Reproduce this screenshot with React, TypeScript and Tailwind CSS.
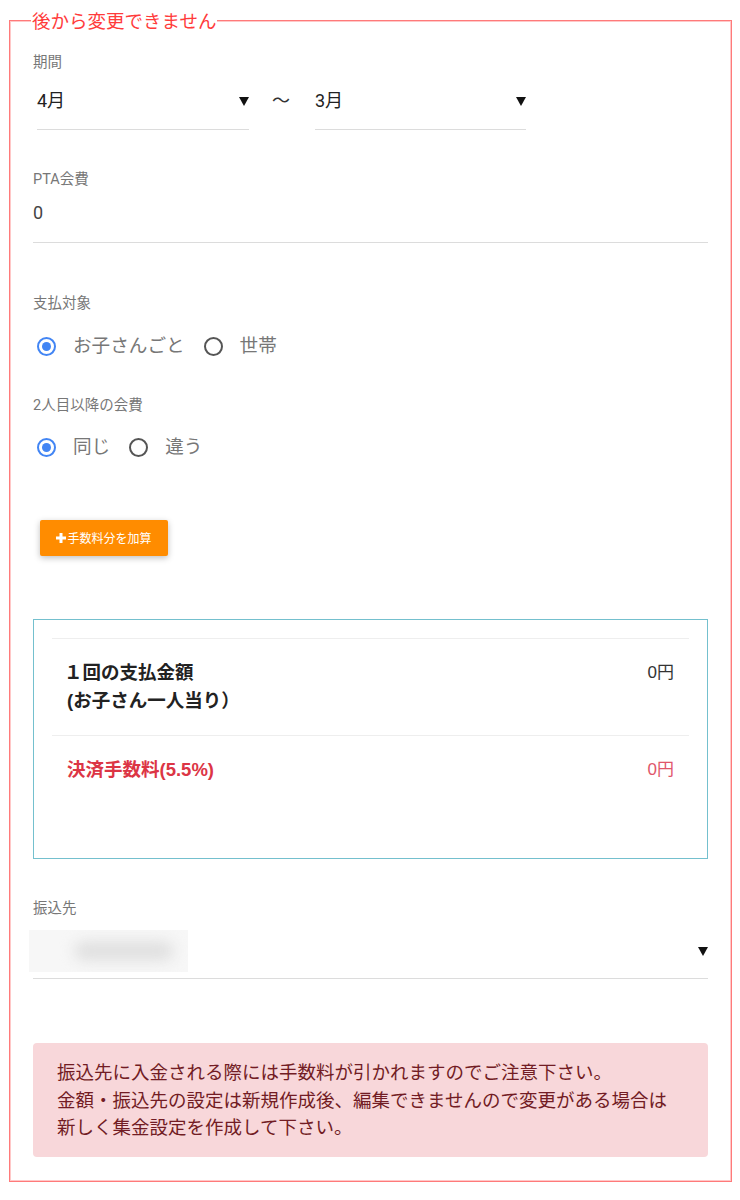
import React from "react";

const Caret = () => (
  <svg width="10" height="9" viewBox="0 0 10 9" className="shrink-0">
    <path d="M0 0h10L5 9z" fill="#111" />
  </svg>
);

const Radio = ({ checked, label, first }: { checked: boolean; label: string; first?: boolean }) => (
  <label className={`flex items-center gap-[17px] mr-[19px] ${first ? "ml-[4px]" : ""}`}>
    {checked ? (
      <span className="w-[19px] h-[19px] rounded-full border-[2px] border-[#4285f4] flex items-center justify-center">
        <span className="w-[9px] h-[9px] rounded-full bg-[#4285f4]" />
      </span>
    ) : (
      <span className="w-[19px] h-[19px] rounded-full border-[2.5px] border-[#555]" />
    )}
    <span className="text-[18.6px] leading-[24px] text-[#777]">{label}</span>
  </label>
);

const FieldLabel = ({ children, className }: { children: React.ReactNode; className?: string }) => (
  <div className={`text-[14.5px] leading-[22px] text-[#777] ${className ?? ""}`}>{children}</div>
);

export default function App() {
  return (
    <div className="w-[740px] min-h-[1200px] bg-white pt-[20px] font-['Roboto','Noto_Sans_CJK_JP',sans-serif]">
      <div className="ml-[9px] w-[723px] border border-[#ff7a7a] shadow-[inset_0_0_0_1px_#ffc8c8] px-[23px] pb-[24px]">
        <div className="-mt-[14px] -ml-[2px] h-[26px]">
          <span className="inline-block px-[1px] bg-white text-[18.5px] leading-[26px] text-[#ff3b3b] font-['Noto_Sans_CJK_JP',sans-serif]">
            後から変更できません
          </span>
        </div>

        {/* 期間 */}
        <FieldLabel className="mt-[19px]">期間</FieldLabel>
        <div className="mt-[11px] flex items-start">
          <div className="ml-[4px] w-[212px] flex items-center justify-between pt-[4px] pb-[16px] border-b border-[#dcdcdc]">
            <span className="text-[18px] leading-[24px] text-[#222]">4月</span>
            <Caret />
          </div>
          <span className="ml-[23px] pt-[4px] text-[18px] leading-[24px] text-[#333]">～</span>
          <div className="ml-[25px] w-[211px] flex items-center justify-between pt-[4px] pb-[16px] border-b border-[#dcdcdc]">
            <span className="text-[18px] leading-[24px] text-[#222]">3月</span>
            <Caret />
          </div>
        </div>

        {/* PTA会費 */}
        <FieldLabel className="mt-[39px]">PTA会費</FieldLabel>
        <div className="pt-[10px] pb-[17px] border-b border-[#dcdcdc] text-[18px] leading-[24px] text-[#444]">0</div>

        {/* 支払対象 */}
        <FieldLabel className="mt-[50px]">支払対象</FieldLabel>
        <div className="mt-[19px] flex items-center h-[24px]">
          <Radio checked first label="お子さんごと" />
          <Radio checked={false} label="世帯" />
        </div>

        {/* 2人目以降の会費 */}
        <FieldLabel className="mt-[37px]">2人目以降の会費</FieldLabel>
        <div className="mt-[18px] flex items-center h-[24px]">
          <Radio checked first label="同じ" />
          <Radio checked={false} label="違う" />
        </div>

        <button className="mt-[61px] ml-[7px] w-[128px] h-[36px] rounded-[2px] bg-[#ff8c00] text-white text-[12px] flex items-center justify-center gap-[1px] shadow-[0_2px_6px_rgba(0,0,0,0.25)] font-['Noto_Sans_CJK_JP',sans-serif]">
          <svg width="10" height="10" viewBox="0 0 10 10">
            <path d="M3.5 0h3v3.5H10v3H6.5V10h-3V6.5H0v-3h3.5z" fill="#fff" />
          </svg>
          手数料分を加算
        </button>

        {/* 金額 */}
        <div className="mt-[63px] h-[240px] border border-[#74c0ce] px-[18px] pt-[18px] font-['Liberation_Sans','Noto_Sans_CJK_JP',sans-serif]">
          <div className="border-t border-[#eeeeee] px-[15px] pt-[20px] pb-[20px] flex justify-between">
            <div className="text-[18.5px] leading-[28px] font-bold text-[#222]">
              <div className="-ml-[3px]">１回の支払金額</div>
              <div>(お子さん一人当り）</div>
            </div>
            <span className="text-[17px] leading-[28px] text-[#333]">0円</span>
          </div>
          <div className="border-t border-[#eeeeee] px-[15px] pt-[20px] flex justify-between">
            <span className="text-[18.5px] leading-[28px] font-bold text-[#dc3545]">決済手数料(5.5%)</span>
            <span className="text-[17px] leading-[28px] text-[#e0566a]">0円</span>
          </div>
        </div>

        {/* 振込先 */}
        <FieldLabel className="mt-[39px]">振込先</FieldLabel>
        <div className="pt-[10px] pb-[6px] border-b border-[#dcdcdc] flex items-center justify-between">
          <div className="-ml-[4px] w-[159px] h-[42px] bg-[#f7f7f7] flex items-center overflow-hidden">
            <span className="ml-[45px] w-[100px] h-[20px] rounded-full bg-[#e0e0e0] blur-[7px]" />
          </div>
          <Caret />
        </div>

        <div className="mt-[64px] rounded-[4px] bg-[#f8d7da] pl-[24px] pr-[12px] pt-[15px] pb-[16px] text-[18.5px] leading-[27.5px] text-[#721c24] font-['Noto_Sans_CJK_JP',sans-serif]">
          <p>振込先に入金される際には手数料が引かれますのでご注意下さい。</p>
          <p>金額・振込先の設定は新規作成後、編集できませんので変更がある場合は</p>
          <p>新しく集金設定を作成して下さい。</p>
        </div>
      </div>
    </div>
  );
}
